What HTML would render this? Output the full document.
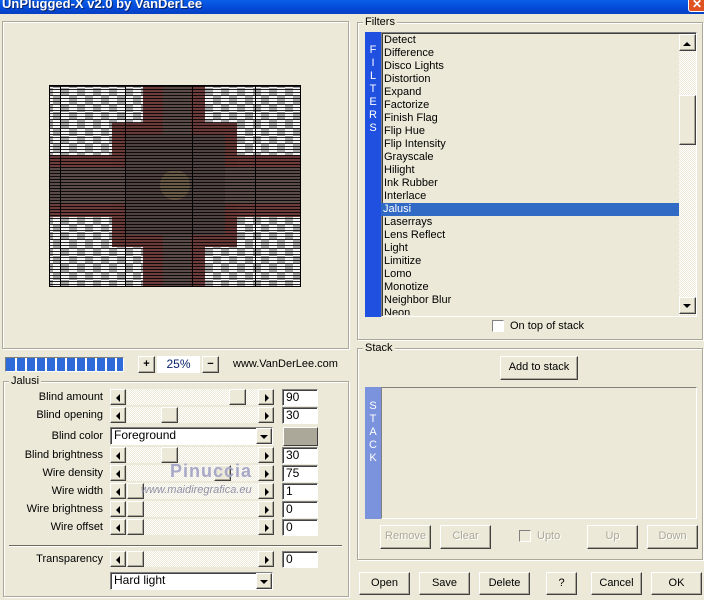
<!DOCTYPE html>
<html><head><meta charset="utf-8"><style>
*{box-sizing:border-box;margin:0;padding:0}
body{width:704px;height:600px;overflow:hidden;background:#ece9d8;font-family:"Liberation Sans",sans-serif;font-size:11px;color:#000;position:relative}
.a{position:absolute}
.grp{position:absolute;border:1px solid #aca899;box-shadow:inset 1px 1px 0 #fff,1px 1px 0 #fff}
.lg{position:absolute;background:#ece9d8;padding:0 2px;font-size:11px;line-height:12px}
.btn{position:absolute;background:#ece9d8;border:1px solid;border-color:#fff #404040 #404040 #fff;box-shadow:inset -1px -1px 0 #aca899;text-align:center;font-size:11px}
.dis{color:#aca899;text-shadow:1px 1px 0 #fff}
.edit{position:absolute;background:#fff;border:1px solid;border-color:#808080 #fff #fff #808080;box-shadow:inset 1px 1px 0 #404040;font-size:12px;padding-left:3px;line-height:14px}
.lbl{position:absolute;right:601px;font-size:11px;text-align:right;white-space:nowrap}
.trk{position:absolute;left:127px;width:131px;height:16px;background:repeating-conic-gradient(#ece9d8 0 25%,#fff 0 50%) 0 0/2px 2px}
.arr{position:absolute;width:16px;height:16px;background:#ece9d8;border:1px solid;border-color:#fff #404040 #404040 #fff;box-shadow:inset -1px -1px 0 #aca899}
.arr:after{content:"";position:absolute;top:4px;left:5px;border:4px solid transparent}
.l:after{border-right:4px solid #000;border-left:0;left:5px}
.r:after{border-left:4px solid #000;border-right:0;left:6px}
.th{position:absolute;width:17px;height:16px;background:#ece9d8;border:1px solid;border-color:#fff #404040 #404040 #fff;box-shadow:inset -1px -1px 0 #aca899}
.li{position:absolute;left:384px;font-size:11px;line-height:13px}
.lines{background-image:repeating-linear-gradient(rgba(0,0,0,.85) 0 1px,transparent 1px 3px)}
</style></head><body>
<div class="a" style="left:0;top:0;width:704px;height:14px;background:linear-gradient(#0a5ee8,#0449d8 60%,#0a3fc0)"></div>
<div class="a" style="left:2px;top:-4px;color:#fff;font-weight:bold;font-size:13px;text-shadow:1px 1px 0 #0a246a">UnPlugged-X v2.0 by VanDerLee</div>
<div class="a" style="left:688px;top:-3px;width:18px;height:15px;background:#e0521f;border:1px solid #fff;border-radius:3px;color:#fff;font-weight:bold;text-align:center;font-size:12px;line-height:13px">✕</div>

<!-- preview -->
<div class="grp" style="left:2px;top:21px;width:347px;height:328px"></div>
<div class="a" style="left:49px;top:85px;width:252px;height:202px;border:1px solid #000;background:repeating-conic-gradient(#a8a8a8 0 25%,#f4f4f4 0 50%) 3px 2px/16px 16px"></div>
<div class="a" style="left:143px;top:86px;width:62px;height:200px;background:#6e3c3a"></div>
<div class="a" style="left:50px;top:155px;width:250px;height:62px;background:#6e3c3a"></div>
<div class="a" style="left:112px;top:123px;width:125px;height:124px;background:#6a3a38"></div>
<div class="a" style="left:163px;top:86px;width:28px;height:200px;background:#5a4a48"></div>
<div class="a" style="left:50px;top:167px;width:250px;height:36px;background:#5a4a48"></div>
<div class="a" style="left:125px;top:135px;width:100px;height:100px;background:#4e4240"></div>
<div class="a" style="left:160px;top:170px;width:30px;height:30px;background:#6a5a48;border-radius:50%"></div>
<div class="a lines" style="left:50px;top:86px;width:250px;height:200px"></div>
<div class="a" style="left:60px;top:86px;width:1px;height:200px;background:#000"></div>
<div class="a" style="left:125px;top:86px;width:1px;height:200px;background:#000"></div>
<div class="a" style="left:192px;top:86px;width:1px;height:200px;background:#000"></div>
<div class="a" style="left:255px;top:86px;width:1px;height:200px;background:#000"></div>

<!-- progress -->
<div class="a" style="left:5px;top:357px;width:119px;height:15px;border:1px solid;border-color:#808080 #fff #fff #808080;background:repeating-linear-gradient(90deg,#2e6ad8 0 8px,#fff 8px 10px);background-origin:content-box;padding:1px"></div>
<div class="btn" style="left:138px;top:356px;width:17px;height:17px;font-weight:bold;line-height:14px">+</div>
<div class="a" style="left:157px;top:356px;width:43px;height:17px;background:#fff;color:#0a246a;font-size:12px;text-align:center;line-height:17px">25%</div>
<div class="btn" style="left:202px;top:356px;width:17px;height:17px;font-weight:bold;line-height:14px">−</div>
<div class="a" style="left:233px;top:358px;font-size:11px">www.VanDerLee.com</div>

<!-- Jalusi -->
<div class="grp" style="left:3px;top:381px;width:346px;height:216px"></div>
<div class="lg" style="left:9px;top:375px">Jalusi</div>

<div class="lbl" style="top:391px">Blind amount</div>
<div class="lbl" style="top:409px">Blind opening</div>
<div class="lbl" style="top:430px">Blind color</div>
<div class="lbl" style="top:449px">Blind brightness</div>
<div class="lbl" style="top:467px">Wire density</div>
<div class="lbl" style="top:485px">Wire width</div>
<div class="lbl" style="top:503px">Wire brightness</div>
<div class="lbl" style="top:521px">Wire offset</div>
<div class="lbl" style="top:553px">Transparency</div>

<div class="trk" style="top:389px"></div><div class="arr l" style="left:110px;top:389px"></div><div class="arr r" style="left:258px;top:389px"></div><div class="th" style="left:229px;top:389px"></div><div class="edit" style="left:282px;top:389px;width:36px;height:17px">90</div>
<div class="trk" style="top:407px"></div><div class="arr l" style="left:110px;top:407px"></div><div class="arr r" style="left:258px;top:407px"></div><div class="th" style="left:161px;top:407px"></div><div class="edit" style="left:282px;top:407px;width:36px;height:17px">30</div>
<div class="edit" style="left:110px;top:427px;width:163px;height:18px;font-size:12px;line-height:15px">Foreground</div>
<div class="arr" style="left:256px;top:428px;height:16px;width:16px"></div><div class="a" style="left:260px;top:435px;border:4px solid transparent;border-top:4px solid #000"></div>
<div class="a" style="left:283px;top:427px;width:35px;height:19px;background:#aca899;border:1px solid;border-color:#fff #404040 #404040 #fff"></div>
<div class="trk" style="top:447px"></div><div class="arr l" style="left:110px;top:447px"></div><div class="arr r" style="left:258px;top:447px"></div><div class="th" style="left:161px;top:447px"></div><div class="edit" style="left:282px;top:447px;width:36px;height:17px">30</div>
<div class="trk" style="top:465px"></div><div class="arr l" style="left:110px;top:465px"></div><div class="arr r" style="left:258px;top:465px"></div><div class="th" style="left:214px;top:465px"></div><div class="edit" style="left:282px;top:465px;width:36px;height:17px">75</div>
<div class="trk" style="top:483px"></div><div class="arr l" style="left:110px;top:483px"></div><div class="arr r" style="left:258px;top:483px"></div><div class="th" style="left:127px;top:483px"></div><div class="edit" style="left:282px;top:483px;width:36px;height:17px">1</div>
<div class="trk" style="top:501px"></div><div class="arr l" style="left:110px;top:501px"></div><div class="arr r" style="left:258px;top:501px"></div><div class="th" style="left:127px;top:501px"></div><div class="edit" style="left:282px;top:501px;width:36px;height:17px">0</div>
<div class="trk" style="top:519px"></div><div class="arr l" style="left:110px;top:519px"></div><div class="arr r" style="left:258px;top:519px"></div><div class="th" style="left:127px;top:519px"></div><div class="edit" style="left:282px;top:519px;width:36px;height:17px">0</div>
<div class="a" style="left:9px;top:545px;width:333px;height:2px;background:#6e6a5e;border-bottom:1px solid #fff"></div>
<div class="trk" style="top:551px"></div><div class="arr l" style="left:110px;top:551px"></div><div class="arr r" style="left:258px;top:551px"></div><div class="th" style="left:127px;top:551px"></div><div class="edit" style="left:282px;top:551px;width:36px;height:17px">0</div>
<div class="edit" style="left:110px;top:572px;width:163px;height:18px;font-size:12px;line-height:15px">Hard light</div>
<div class="arr" style="left:256px;top:573px;height:16px;width:16px"></div><div class="a" style="left:260px;top:580px;border:4px solid transparent;border-top:4px solid #000"></div>
<div class="a" style="left:170px;top:461px;font-size:18px;font-weight:bold;color:#a8a8c8;letter-spacing:1px">Pinuccia</div>
<div class="a" style="left:141px;top:484px;font-size:11px;font-style:italic;color:#9090a8">www.maidiregrafica.eu</div>

<!-- Filters -->
<div class="grp" style="left:357px;top:22px;width:346px;height:318px"></div>
<div class="lg" style="left:363px;top:16px">Filters</div>
<div class="a" style="left:365px;top:32px;width:16px;height:285px;background:#1f50e0;color:#fff;font-size:11px;line-height:13px;text-align:center;padding-top:12px">F<br>I<br>L<br>T<br>E<br>R<br>S</div>
<div class="a" style="left:381px;top:32px;width:316px;height:285px;border:1px solid;border-color:#808080 #fff #fff #808080;box-shadow:inset 1px 1px 0 #404040;overflow:hidden"></div>
<div class="a" style="left:381px;top:203px;width:298px;height:13px;background:#316ac5"></div>
<div class="li" style="top:34px">Detect</div><div class="li" style="top:47px">Difference</div><div class="li" style="top:60px">Disco Lights</div><div class="li" style="top:73px">Distortion</div><div class="li" style="top:86px">Expand</div><div class="li" style="top:99px">Factorize</div><div class="li" style="top:112px">Finish Flag</div><div class="li" style="top:125px">Flip Hue</div><div class="li" style="top:138px">Flip Intensity</div><div class="li" style="top:151px">Grayscale</div><div class="li" style="top:164px">Hilight</div><div class="li" style="top:177px">Ink Rubber</div><div class="li" style="top:190px">Interlace</div><div class="li" style="top:203px;left:383px;color:#fff">Jalusi</div><div class="li" style="top:216px">Laserrays</div><div class="li" style="top:229px">Lens Reflect</div><div class="li" style="top:242px">Light</div><div class="li" style="top:255px">Limitize</div><div class="li" style="top:268px">Lomo</div><div class="li" style="top:281px">Monotize</div><div class="li" style="top:294px">Neighbor Blur</div>
<div class="li" style="top:307px;height:8px;overflow:hidden">Neon</div>
<div class="a" style="left:679px;top:34px;width:17px;height:281px;background:repeating-conic-gradient(#ece9d8 0 25%,#fff 0 50%) 0 0/2px 2px"></div>
<div class="arr" style="left:679px;top:34px;width:17px;height:17px"></div><div class="a" style="left:683px;top:38px;border:4px solid transparent;border-bottom:4px solid #000"></div>
<div class="th" style="left:679px;top:95px;height:50px;width:17px"></div>
<div class="arr" style="left:679px;top:297px;width:17px;height:17px"></div><div class="a" style="left:683px;top:304px;border:4px solid transparent;border-top:4px solid #000"></div>
<div class="a" style="left:492px;top:320px;width:12px;height:12px;background:#fff;border:1px solid;border-color:#808080 #fff #fff #808080"></div>
<div class="a" style="left:510px;top:320px">On top of stack</div>

<!-- Stack -->
<div class="grp" style="left:357px;top:348px;width:346px;height:212px"></div>
<div class="lg" style="left:363px;top:342px">Stack</div>
<div class="btn" style="left:500px;top:356px;width:78px;height:24px;line-height:21px">Add to stack</div>
<div class="a" style="left:365px;top:387px;width:16px;height:132px;background:#7b93dc;color:#fff;line-height:13px;text-align:center;padding-top:13px">S<br>T<br>A<br>C<br>K</div>
<div class="a" style="left:381px;top:387px;width:316px;height:132px;border:1px solid;border-color:#808080 #fff #fff #808080"></div>
<div class="btn dis" style="left:380px;top:525px;width:51px;height:24px;line-height:21px">Remove</div>
<div class="btn dis" style="left:440px;top:525px;width:51px;height:24px;line-height:21px">Clear</div>
<div class="a" style="left:519px;top:530px;width:12px;height:12px;border:1px solid;border-color:#808080 #fff #fff #808080"></div>
<div class="a dis" style="left:537px;top:530px">Upto</div>
<div class="btn dis" style="left:587px;top:525px;width:51px;height:24px;line-height:21px">Up</div>
<div class="btn dis" style="left:647px;top:525px;width:51px;height:24px;line-height:21px">Down</div>

<div class="btn" style="left:359px;top:572px;width:51px;height:23px;line-height:20px">Open</div>
<div class="btn" style="left:419px;top:572px;width:51px;height:23px;line-height:20px">Save</div>
<div class="btn" style="left:479px;top:572px;width:51px;height:23px;line-height:20px">Delete</div>
<div class="btn" style="left:546px;top:572px;width:31px;height:23px;line-height:20px">?</div>
<div class="btn" style="left:591px;top:572px;width:51px;height:23px;line-height:20px">Cancel</div>
<div class="btn" style="left:651px;top:572px;width:51px;height:23px;line-height:20px">OK</div>
</body></html>
